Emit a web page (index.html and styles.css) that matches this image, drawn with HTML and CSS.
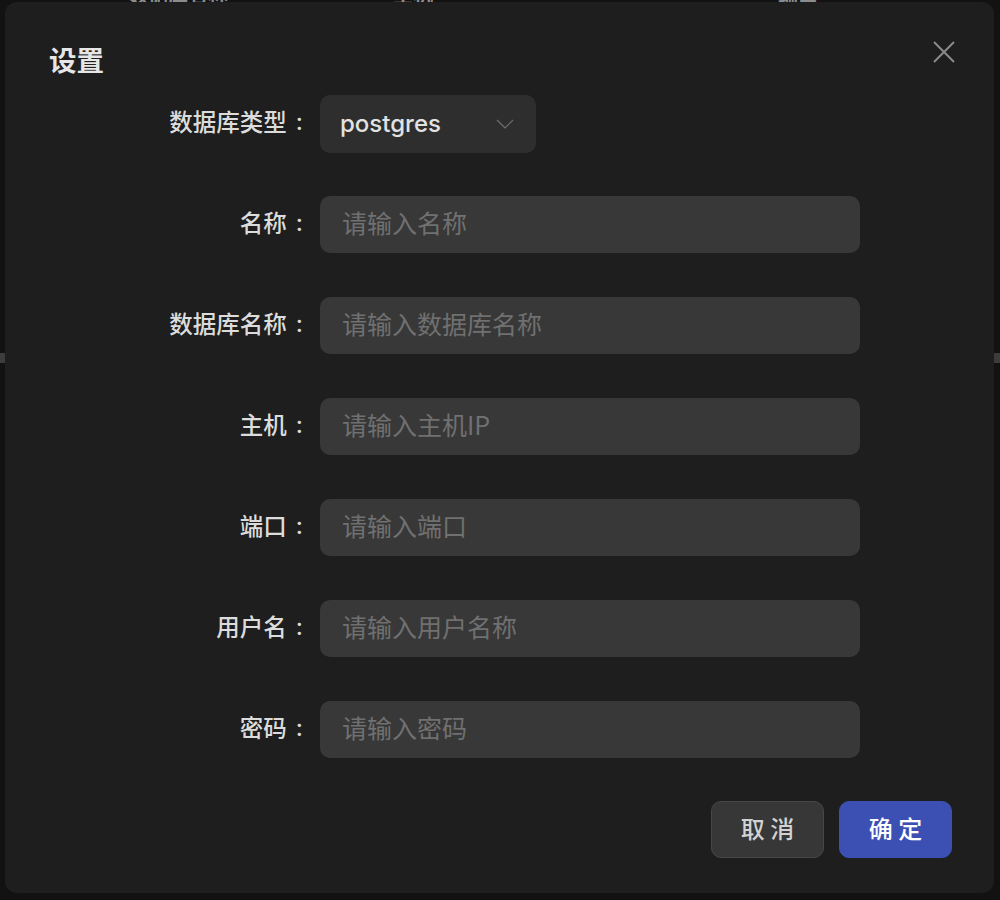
FILE: index.html
```html
<!DOCTYPE html>
<html lang="zh-CN">
<head>
<meta charset="utf-8">
<title>设置</title>
<link rel="stylesheet" href="styles.css">
</head>
<body>
<div class="page">
  <div class="thead">
    <span class="th th-1">数据库名称</span>
    <span class="th th-2">主机</span>
    <span class="th th-3">端口</span>
  </div>
  <div class="splitter"></div>
</div>

<div class="overlay">
  <div class="dialog">
    <div class="dialog-header">
      <h2 class="dialog-title">设置</h2>
      <button class="close-btn" aria-label="关闭">
        <svg width="22" height="22" viewBox="0 0 22 22"><path d="M1 1 L21 21 M21 1 L1 21" stroke="#8a8a8a" stroke-width="2" fill="none"/></svg>
      </button>
    </div>
    <form class="form">
      <label class="label">数据库类型</label>
      <div class="select">
        <span class="select-value">postgres</span>
        <svg class="chevron" width="18" height="10" viewBox="0 0 18 10"><path d="M1 1 L9 9 L17 1" stroke="#6e6e6e" stroke-width="1.2" fill="none"/></svg>
      </div>

      <label class="label">名称</label>
      <input class="input" placeholder="请输入名称">

      <label class="label">数据库名称</label>
      <input class="input" placeholder="请输入数据库名称">

      <label class="label">主机</label>
      <input class="input" placeholder="请输入主机IP">

      <label class="label">端口</label>
      <input class="input" placeholder="请输入端口">

      <label class="label">用户名</label>
      <input class="input" placeholder="请输入用户名称">

      <label class="label">密码</label>
      <input class="input" placeholder="请输入密码">
    </form>
    <div class="footer">
      <button class="btn btn-cancel">取 消</button>
      <button class="btn btn-ok">确 定</button>
    </div>
  </div>
</div>
</body>
</html>
```

FILE: styles.css
```css
* { box-sizing: border-box; }

html, body {
  margin: 0;
  padding: 0;
  width: 1000px;
  height: 900px;
  background: #121212;
  overflow: hidden;
  font-family: "Inter", "Noto Sans CJK SC", sans-serif;
}

.page {
  width: 1000px;
  height: 900px;
}

.thead {
  display: flex;
  height: 20px;
  margin-top: -14px;
  color: #8c8c8c;
  font-size: 20px;
  line-height: 20px;
  font-weight: 600;
}

.th-1 { margin-left: 128px; }
.th-2 { margin-left: 165px; }
.th-3 { margin-left: 345px; }

.splitter {
  margin-top: 347px;
  height: 10px;
  background: #3c3c3c;
}

.overlay {
  position: absolute;
  inset: 0;
}

.dialog {
  position: absolute;
  left: 5px;
  top: 2px;
  width: 989px;
  height: 891px;
  background: #1e1e1e;
  border-radius: 12px;
  display: flex;
  flex-direction: column;
}

.dialog-header {
  display: flex;
  justify-content: space-between;
  align-items: center;
  padding: 38px 39px 0 44px;
  height: 76px;
}

.dialog-title {
  margin: 0;
  font-size: 27.5px;
  line-height: 36px;
  font-weight: 700;
  color: #e6e6e6;
  font-family: "Noto Sans CJK SC", sans-serif;
}

.close-btn {
  border: 0;
  background: transparent;
  padding: 0;
  width: 22px;
  height: 22px;
  margin-top: -14px;
  display: flex;
  cursor: pointer;
}

.form {
  display: grid;
  grid-template-columns: 315px 540px;
  grid-auto-rows: 57px;
  row-gap: 44px;
  margin-top: 17px;
}

.form > .select { height: 58px; }

.label {
  display: flex;
  align-items: center;
  justify-content: flex-end;
  padding-bottom: 5px;
  font-family: "Noto Sans CJK SC", sans-serif;
  font-size: 23.5px;
  color: #dcdcdc;
  font-weight: 500;
}

.label::after {
  content: ":";
  font-family: "Inter", sans-serif;
  margin: 0 17px 0 9px;
}

.select {
  width: 216px;
  background: #2e2e2e;
  border-radius: 10px;
  display: flex;
  align-items: center;
  justify-content: space-between;
  padding: 0 22px 0 20px;
}

.select-value {
  font-size: 24px;
  color: #e2e2e2;
  font-family: "Inter", sans-serif;
  font-weight: 500;
  margin-bottom: 2px;
}

.chevron { margin-top: 0; }

.input {
  width: 540px;
  height: 57px;
  border: 0;
  outline: 0;
  border-radius: 10px;
  background: #383838;
  padding: 0 22px 5px 22px;
  font-size: 25px;
  color: #e0e0e0;
  font-family: "Noto Sans CJK SC", sans-serif;
}

.input::placeholder {
  color: #707070;
  opacity: 1;
}

.footer {
  display: flex;
  justify-content: flex-end;
  gap: 15px;
  padding: 0 42px 0 0;
  margin-top: 43px;
}

.btn {
  width: 113px;
  height: 57px;
  border-radius: 10px;
  padding: 0 0 5px 0;
  font-family: "Noto Sans CJK SC", sans-serif;
  font-size: 24px;
  font-weight: 500;
  cursor: pointer;
}

.btn-cancel {
  background: #373737;
  border: 1px solid #474747;
  color: #d2d2d2;
}

.btn-ok {
  background: #3c50b3;
  border: 1px solid #3c50b3;
  color: #ffffff;
}
```
